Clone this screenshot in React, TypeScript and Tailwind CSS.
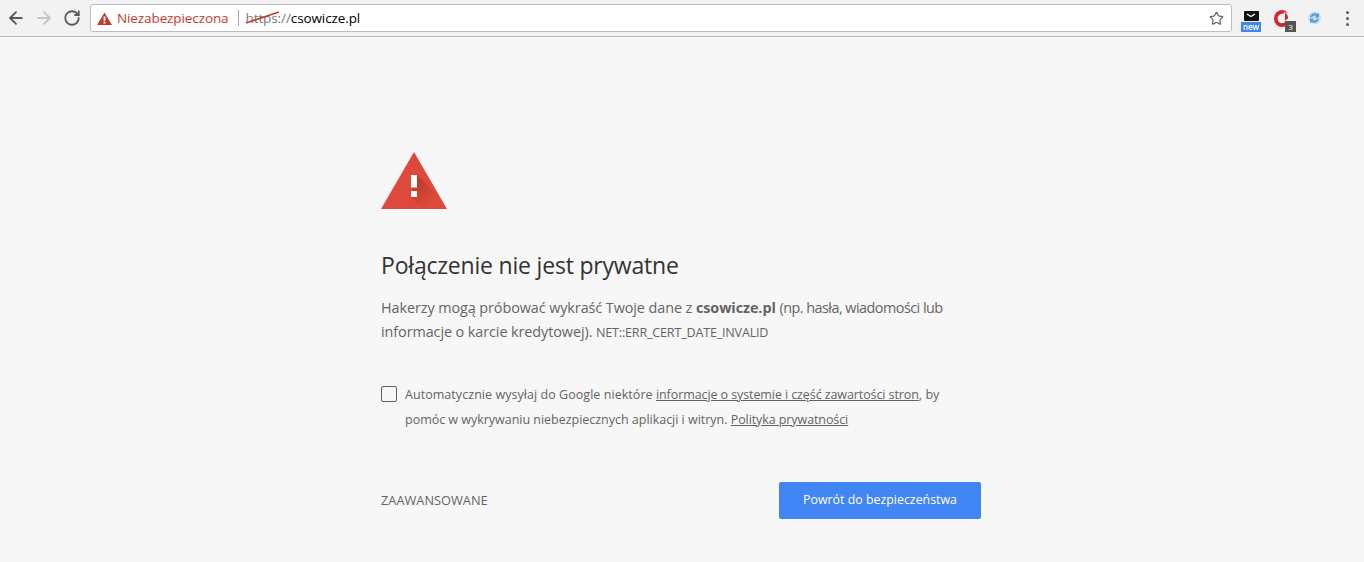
import { ArrowLeft, ArrowRight, RotateCw, Star } from "lucide-react"

const font = "font-['Open_Sans',sans-serif]"

function Toolbar() {
  return (
    <div className="flex h-[37px] items-center border-b border-[#b8b8b8] bg-[#f2f2f2] pl-[6px] pr-[10px]">
      <ArrowLeft size={20} strokeWidth={2.2} className="text-[#5a5a5a]" />
      <ArrowRight size={20} strokeWidth={2.2} className="ml-[8px] text-[#c4c4c4]" />
      <RotateCw size={18} strokeWidth={2.4} className="ml-[9px] text-[#5a5a5a]" />

      {/* Address bar */}
      <div className="ml-[9px] flex h-[28px] w-[1142px] items-center rounded-[3px] border border-[#bdbdbd] bg-white pl-[6px] pr-[7px]">
        <svg width="15" height="13" viewBox="0 0 16 14">
          <path d="M8 0.5 L16 14 H0 Z" fill="#c5392b" />
          <rect x="7" y="4.8" width="2" height="4.6" fill="#fff" />
          <rect x="7" y="10.4" width="2" height="2" fill="#fff" />
        </svg>
        <span className={`${font} ml-[5px] text-[13.5px] tracking-[-0.1px] text-[#c5392b]`}>Niezabezpieczona</span>
        <span className="ml-[9px] h-[16px] w-px bg-[#a8a8a8]" />
        <span className={`${font} relative ml-[7px] text-[13.5px] tracking-[-0.1px] text-[#7a7a7a]`}>
          <span className="relative">
            https
            <svg className="absolute left-0 top-[2px]" width="33" height="14" viewBox="0 0 33 14">
              <path d="M0 12 L33 1" stroke="#c5392b" strokeWidth="1.6" />
            </svg>
          </span>
          ://<span className="text-black">csowicze.pl</span>
        </span>
        <Star size={15} strokeWidth={1.8} className="ml-auto text-[#5a5a5a]" />
      </div>

      {/* Extensions */}
      <div className="ml-[9px] mt-[6px] flex w-[20px] flex-col items-center gap-[1px]">
        <div className="flex h-[10px] w-[15px] items-center justify-center rounded-[1px] bg-[#111]">
          <svg width="10" height="5" viewBox="0 0 10 5">
            <path d="M1 1 L5 3.5 L9 1" fill="none" stroke="#fff" strokeWidth="1.3" />
          </svg>
        </div>
        <div className={`${font} h-[10px] w-[20px] bg-[#3f86f5] text-center text-[8px] font-semibold leading-[10px] text-white`}>new</div>
      </div>
      <div className="relative ml-[13px] mt-[6px] h-[22px] w-[22px]">
        <svg width="17" height="17" viewBox="0 0 17 17" className="absolute left-0 top-0">
          <ellipse cx="8" cy="8.5" rx="6.2" ry="6.6" fill="none" stroke="#d8232a" strokeWidth="3.6" />
          <path d="M9.5 2.5 h7 v12 h-4 l-3 -4 z" fill="#f2f2f2" />
          <path d="M11 3 c2 0 3 2.5 3 5.5 l-3 2 z" fill="#d8232a" />
        </svg>
        <div className={`${font} absolute left-[11px] top-[11px] h-[11px] w-[11px] bg-[#555] text-center text-[8px] leading-[11px] text-white`}>3</div>
      </div>
      <svg width="15" height="14" viewBox="0 0 15 14" className="ml-[11px] mt-[-1px]">
        <circle cx="7.5" cy="7" r="6.5" fill="#c9dff0" />
        <path d="M3 6 A5 5 0 0 1 10.5 3 L12 2 V6.5 H8 L9.4 5 A3 3 0 0 0 5 6.2 Z" fill="#4a9fdf" />
        <path d="M12 8 A5 5 0 0 1 4.5 11 L3 12 V7.5 H7 L5.6 9 A3 3 0 0 0 10 7.8 Z" fill="#4a9fdf" />
      </svg>
      <div className="ml-[24px] mt-[1px] flex flex-col gap-[3px]">
        <span className="size-[3px] rounded-full bg-[#5a5a5a]" />
        <span className="size-[3px] rounded-full bg-[#5a5a5a]" />
        <span className="size-[3px] rounded-full bg-[#5a5a5a]" />
      </div>
    </div>
  )
}

export default function App() {
  return (
    <div className={`${font} h-[562px] w-[1364px] overflow-hidden bg-[#f7f7f7]`}>
      <Toolbar />
      <main className="ml-[381px] w-[600px] pt-[115px]">
        {/* Warning triangle */}
        <svg width="66" height="58" viewBox="0 0 66 58" className="block">
          <defs>
            <linearGradient id="markShadow" x1="33" y1="34" x2="50" y2="51" gradientUnits="userSpaceOnUse">
              <stop offset="0" stopColor="#a8301f" stopOpacity="0.55" />
              <stop offset="1" stopColor="#a8301f" stopOpacity="0" />
            </linearGradient>
          </defs>
          <path d="M33 0 L66 57 H0 Z" fill="#dd4a3b" />
          <path d="M36 23 L60.5 47.5 L55 57 H42 L30 45 Z" fill="url(#markShadow)" />
          <rect x="30" y="23" width="6" height="12.5" fill="#fff" />
          <rect x="30" y="39" width="6" height="6" fill="#fff" />
        </svg>

        <h1 className="mt-[40px] text-[23px] font-normal leading-[30px] tracking-[-0.2px] text-[#333]">Połączenie nie jest prywatne</h1>

        <p className="mt-[16px] text-[14.4px] leading-[24px] tracking-[-0.08px] text-[#646464]">
          Hakerzy mogą próbować wykraść Twoje dane z <b className="font-bold">csowicze.pl</b>{" "}
          <span className="tracking-[-0.52px]">(np. hasła, wiadomości lub</span>
          <br />
          informacje o karcie kredytowej). <span className="text-[12.6px] tracking-[-0.2px]">NET::ERR_CERT_DATE_INVALID</span>
        </p>

        <div className="mt-[38px] flex items-start">
          <span className="mt-[3px] size-[16px] shrink-0 rounded-[2px] border border-[#5f5f5f]" />
          <p className="ml-[8px] text-[12.5px] leading-[24.5px] tracking-[0.05px] text-[#646464]">
            Automatycznie wysyłaj do Google niektóre <span className="underline tracking-[-0.09px]">informacje o systemie i część zawartości stron</span>, by
            <br />
            <span className="tracking-[-0.02px]">pomóc w wykrywaniu niebezpiecznych aplikacji i witryn.</span> <span className="underline tracking-[-0.09px]">Polityka prywatności</span>
          </p>
        </div>

        <div className="mt-[50px] flex items-center justify-between">
          <span className="text-[12.8px] text-[#646464]">ZAAWANSOWANE</span>
          <button className="h-[37px] w-[202px] rounded-[2px] bg-[#4285f4] text-[12.4px] font-normal text-white">Powrót do bezpieczeństwa</button>
        </div>
      </main>
    </div>
  )
}
